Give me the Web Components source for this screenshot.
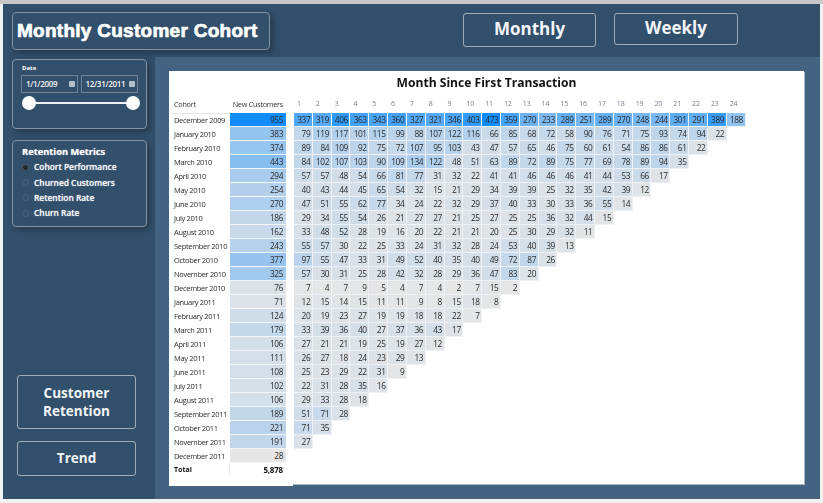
<!DOCTYPE html>
<html>
<head>
<meta charset="utf-8">
<title>Monthly Customer Cohort</title>
<style>
html, body { margin: 0; padding: 0; height: 100%; overflow: hidden; }
body { background: #f2f2f2; font-family: "Open Sans", "Liberation Sans", sans-serif; }
</style>
</head>
<body>
<cohort-report></cohort-report>
<script>
const ROWS = [
  ["December 2009", 955, "337 319 406 363 343 360 327 321 346 403 473 359 270 233 289 251 289 270 248 244 301 291 389 188"],
  ["January 2010", 383, "79 119 117 101 115 99 88 107 122 116 66 85 68 72 58 90 76 71 75 93 74 94 22"],
  ["February 2010", 374, "89 84 109 92 75 72 107 95 103 43 47 57 65 46 75 60 61 54 86 86 61 22"],
  ["March 2010", 443, "84 102 107 103 90 109 134 122 48 51 63 89 72 89 75 77 69 78 89 94 35"],
  ["April 2010", 294, "57 57 48 54 66 81 77 31 32 22 41 41 46 46 46 41 44 53 66 17"],
  ["May 2010", 254, "40 43 44 45 65 54 32 15 21 29 34 39 39 25 32 35 42 39 12"],
  ["June 2010", 270, "47 51 55 62 77 34 24 22 32 29 37 40 33 30 33 36 55 14"],
  ["July 2010", 186, "29 34 55 54 26 21 27 27 21 25 27 25 25 36 32 44 15"],
  ["August 2010", 162, "33 48 52 28 19 16 20 22 21 21 20 25 30 29 32 11"],
  ["September 2010", 243, "55 57 30 22 25 33 24 31 32 28 24 53 40 39 13"],
  ["October 2010", 377, "97 55 47 33 31 49 52 40 35 40 49 72 87 26"],
  ["November 2010", 325, "57 30 31 25 28 42 32 28 29 36 47 83 20"],
  ["December 2010", 76, "7 4 7 9 5 4 7 4 2 7 15 2"],
  ["January 2011", 71, "12 15 14 15 11 11 9 8 15 18 8"],
  ["February 2011", 124, "20 19 23 27 19 19 18 18 22 7"],
  ["March 2011", 179, "33 39 36 40 27 37 36 43 17"],
  ["April 2011", 106, "27 21 21 19 25 19 27 12"],
  ["May 2011", 111, "26 27 18 24 23 29 13"],
  ["June 2011", 108, "25 23 29 22 31 9"],
  ["July 2011", 102, "22 31 28 35 16"],
  ["August 2011", 106, "29 33 28 18"],
  ["September 2011", 189, "51 71 28"],
  ["October 2011", 221, "71 35"],
  ["November 2011", 191, "27"],
  ["December 2011", 28, ""]
];

// same ramp as the report's conditional format: grey to blue
function heat(v, min, max) {
  const t = (v - min) / (max - min);
  const mix = (a, b) => Math.round(a + (b - a) * t);
  return `rgb(${mix(230, 17)},${mix(230, 141)},${mix(230, 255)})`;
}

class PanelBox extends HTMLElement {
  constructor() {
    super();
    this.attachShadow({ mode: "open" }).innerHTML = `
      <style>
        :host {
          display: block;
          box-sizing: border-box;
          background: #324f6b;
          border: 1px solid #8593a3;
          border-radius: 4px;
          box-shadow: 3px 3px 6px rgba(0, 0, 0, 0.28);
          color: #fff;
        }
      </style>
      <slot></slot>`;
  }
}

class NavButton extends HTMLElement {
  constructor() {
    super();
    this.attachShadow({ mode: "open" }).innerHTML = `
      <style>
        :host {
          display: flex;
          align-items: center;
          justify-content: center;
          box-sizing: border-box;
          border: 1px solid #a3adb8;
          border-radius: 3px;
          color: #f2f5f8;
          font: 700 var(--size, 13.5px)/18.5px "Open Sans", sans-serif;
          text-align: center;
          padding-bottom: var(--lift, 0);
        }
      </style>
      <slot></slot>`;
  }
}

class DateSlicer extends HTMLElement {
  constructor() {
    super();
    this.attachShadow({ mode: "open" }).innerHTML = `
      <style>
        :host { display: block; padding: 4px 8px 0 8px; height: 68px; box-sizing: border-box; }
        .label { font: 700 6px/8px "Open Sans", sans-serif; margin-left: 1px; color: #fff; }
        .dates { display: flex; gap: 3px; margin-top: 3px; }
        .date {
          box-sizing: border-box;
          height: 18px;
          border: 1.5px solid #6f8194;
          display: flex;
          align-items: center;
          justify-content: space-between;
          padding: 0 2px 0 4px;
          font: 600 8px/1 "Open Sans", sans-serif;
          letter-spacing: -.3px;
          color: #f4f6f8;
        }
        .d1 { width: 57px; }
        .d2 { width: 58px; }
        .cal { width: 6px; height: 6px; background: #b4bfca; border-radius: 1px; }
        .track { position: relative; height: 14px; margin: 3px 0 0 1px; width: 118px; }
        .line { position: absolute; left: 6px; right: 6px; top: 6px; height: 2px; background: #eef1f4; }
        .knob { position: absolute; top: 0; width: 14px; height: 14px; border-radius: 50%; background: #fff; }
      </style>
      <div class="label">Date</div>
      <div class="dates">
        <div class="date d1">1/1/2009<span class="cal"></span></div>
        <div class="date d2">12/31/2011<span class="cal"></span></div>
      </div>
      <div class="track"><div class="line"></div><div class="knob" style="left:0"></div><div class="knob" style="right:0"></div></div>`;
  }
}

class RadioList extends HTMLElement {
  constructor() {
    super();
    const items = ["Cohort Performance", "Churned Customers", "Retention Rate", "Churn Rate"];
    this.attachShadow({ mode: "open" }).innerHTML = `
      <style>
        :host { display: block; padding: 3px 9px 0 9px; height: 85px; box-sizing: border-box; text-shadow: 0 0 1px rgba(255, 255, 255, .7); }
        h3 { margin: 0; font: 700 9.3px/16px "Open Sans", sans-serif; color: #fff; }
        .item { display: flex; align-items: center; gap: 5px; height: 15.2px; font: 600 8.4px/1 "Open Sans", sans-serif; color: #f6f8fa; white-space: nowrap; }
        .dot { width: 7px; height: 7px; box-sizing: border-box; border-radius: 50%; border: 1px solid #4d667f; flex: none; }
        .dot.on { background: #20262c; border-color: #4d5a68; }
      </style>
      <h3>Retention Metrics</h3>
      ${items.map((t, i) => `<div class="item"><span class="dot ${i == 0 ? "on" : ""}"></span>${t}</div>`).join("")}`;
  }
}

class CohortMatrix extends HTMLElement {
  constructor() {
    super();
    const head = Array.from({ length: 24 }, (_, i) => `<div class="m">${i + 1}</div>`).join("");
    const body = ROWS.map(r => {
      const vals = r[2] ? r[2].split(" ").map(Number) : [];
      const cells = vals.map(v => `<div class="c" style="background:${heat(v, 2, 473)}">${v}</div>`).join("");
      return `<div class="row">
        <div class="name">${r[0]}</div>
        <div class="nc" style="background:${heat(r[1], 28, 955)}">${r[1]}</div>
        <div class="gap"></div>${cells}</div>`;
    }).join("");
    this.attachShadow({ mode: "open" }).innerHTML = `
      <style>
        :host { display: block; position: relative; background: #fff; height: 413px; box-sizing: border-box; padding-left: 3px; box-shadow: 1px 1px 0 #a8b5c3; color: #2b2b2b; font: 400 7.6px/14px "Open Sans", sans-serif; filter: blur(.25px); }
        :host::after { content: ""; position: absolute; left: 0; bottom: -2px; width: 124px; height: 2px; background: #fff; }
        h2 { margin: 0; height: 26px; font: 700 12.1px/23px "Open Sans", sans-serif; color: #111; text-align: center; padding-right: 3px; }
        .row { display: flex; height: 14px; }
        .head { height: 16px; box-sizing: border-box; padding-bottom: 2px; align-items: center; }
        .name { width: 58px; padding-left: 2px; box-sizing: border-box; flex: none; white-space: nowrap; overflow: hidden; font-size: 7.5px; letter-spacing: -.33px; }
        .nc { width: 56px; flex: none; text-align: right; padding-right: 3px; box-sizing: border-box; border-bottom: 1px solid #f4f6f8; font-size: 8.3px; letter-spacing: -.42px; }
        .gap { width: 8px; flex: none; }
        .c { width: 18.82px; flex: none; box-sizing: border-box; text-align: right; padding-right: 1.6px; border-right: 1px solid #eef1f5; border-bottom: 1px solid #eef1f5; font-size: 8.3px; letter-spacing: -.42px; }
        .m { width: 18.82px; flex: none; box-sizing: border-box; padding-left: 3px; color: #77808a; font-size: 7px; letter-spacing: -.1px; }
        .head .name, .head .nch { color: #333; font-size: 7.2px; letter-spacing: -.22px; }
        .nch { width: 56px; flex: none; text-align: right; padding-right: 3px; box-sizing: border-box; white-space: nowrap; }
        .rule { height: 1px; width: 58px; background: #e4e4e4; margin-bottom: -1px; }
        .total { font-weight: 700; color: #111; }
        .total .name { font-size: 7px; letter-spacing: 0; border-right: 1px solid #eee; }
        .total .sum { width: 56px; flex: none; text-align: right; padding-right: 3px; box-sizing: border-box; font-size: 8px; letter-spacing: -.2px; }
      </style>
      <h2>Month Since First Transaction</h2>
      <div class="row head"><div class="name">Cohort</div><div class="nch">New Customers</div><div class="gap"></div>${head}</div>
      <div class="rule"></div>
      ${body}
      <div class="row total"><div class="name">Total</div><div class="sum">5,878</div></div>`;
  }
}

class CohortReport extends HTMLElement {
  constructor() {
    super();
    this.attachShadow({ mode: "open" }).innerHTML = `
      <style>
        :host { display: block; }
        .topband { height: 4px; background: #c8c8c8; }
        .page { margin-left: 3px; width: 817px; height: 495px; background: #324f6b; display: grid; grid-template-columns: 152px 1fr; grid-template-rows: 53px 1fr; }
        .header { grid-column: 1 / 3; display: flex; align-items: flex-start; padding-top: 8px; }
        .title { width: 258px; height: 38px; margin-left: 9px; display: flex; align-items: center; padding: 0 0 2px 4px; box-sizing: border-box; font: 700 19px/1 "Liberation Sans", sans-serif; letter-spacing: .27px; -webkit-text-stroke: .7px #fff; white-space: nowrap; }
        .monthly { width: 133px; height: 34px; margin: 1px 0 0 193px; --size: 17px; --lift: 2px; }
        .weekly { width: 124px; height: 32px; margin: 1px 0 0 18px; --size: 17px; --lift: 2px; }
        .side { display: flex; flex-direction: column; padding: 2px 0 0 9px; }
        .side panel-box { width: 135px; }
        .side panel-box + panel-box { margin-top: 11px; }
        .cr { width: 119px; height: 54px; margin: 148px 0 0 5px; }
        .tr { width: 119px; height: 35px; margin: 12px 0 0 5px; }
        .canvas { background: #446381; padding: 14px 16px 0 14px; }
      </style>
      <div class="topband"></div>
      <div class="page">
        <div class="header">
          <panel-box class="title">Monthly Customer Cohort</panel-box>
          <nav-button class="monthly">Monthly</nav-button>
          <nav-button class="weekly">Weekly</nav-button>
        </div>
        <div class="side">
          <panel-box><date-slicer></date-slicer></panel-box>
          <panel-box><radio-list></radio-list></panel-box>
          <nav-button class="cr">Customer<br>Retention</nav-button>
          <nav-button class="tr">Trend</nav-button>
        </div>
        <div class="canvas"><cohort-matrix></cohort-matrix></div>
      </div>`;
  }
}

customElements.define("panel-box", PanelBox);
customElements.define("nav-button", NavButton);
customElements.define("date-slicer", DateSlicer);
customElements.define("radio-list", RadioList);
customElements.define("cohort-matrix", CohortMatrix);
customElements.define("cohort-report", CohortReport);
</script>
</body>
</html>
